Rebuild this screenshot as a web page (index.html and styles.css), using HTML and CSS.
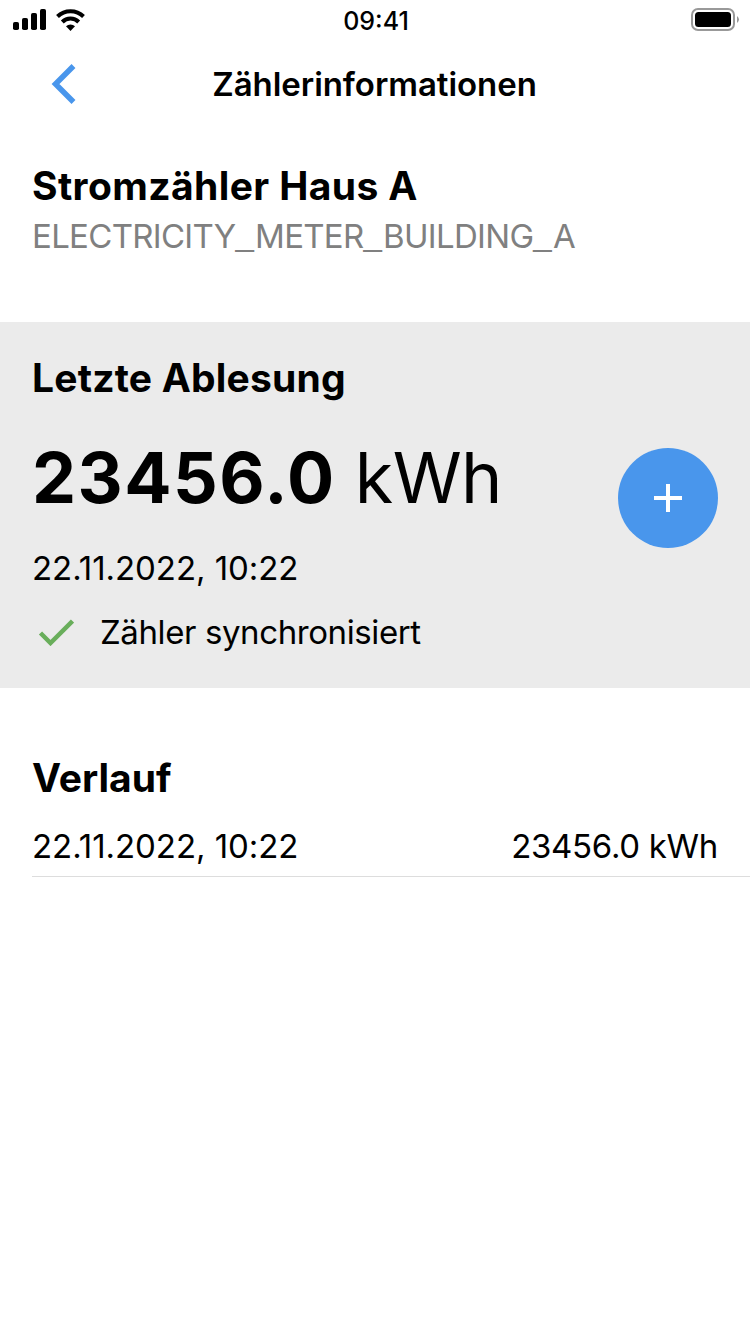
FILE: index.html
```html
<!DOCTYPE html>
<html lang="de">
<head>
    <meta charset="UTF-8">
    <meta name="viewport" content="width=device-width, initial-scale=1.0">
    <title>Zählerinformationen</title>
    <link rel="stylesheet" href="styles.css">
</head>
<body>
    <div class="status-bar">
        <div class="status-left">
            <svg width="34" height="22" viewBox="0 0 34 22">
                <rect x="0" y="13" width="6" height="8" rx="1.8"/>
                <rect x="9" y="9" width="6" height="12" rx="1.8"/>
                <rect x="18" y="4" width="6" height="17" rx="1.8"/>
                <rect x="27" y="0" width="6" height="21" rx="1.8"/>
            </svg>
            <svg width="30" height="22" viewBox="0 0 30 22">
                <path d="M1.500 7.500 A18.500 18.500 0 0 1 27.500 7.500" fill="none" stroke="#000" stroke-width="4"/>
                <path d="M6.300 13 A11.500 11.500 0 0 1 22.700 13" fill="none" stroke="#000" stroke-width="4"/>
                <path d="M10 17.300 A6.800 6.800 0 0 1 19 17.300 L14.500 22 Z"/>
            </svg>
        </div>
        <span class="clock">09:41</span>
        <svg class="battery" width="49" height="24" viewBox="0 0 49 24">
            <rect x="1" y="1" width="42" height="21" rx="6" fill="none" stroke="#999" stroke-width="2"/>
            <rect x="4" y="4" width="36" height="15" rx="3.500"/>
            <path d="M46 8 Q50 11.500 46 15 Z" fill="#999"/>
        </svg>
    </div>

    <header class="nav-bar">
        <a class="back" href="#" aria-label="Zurück">
            <svg width="28" height="42" viewBox="0 0 28 42">
                <path d="M23.500 3 L5.500 21 L23.500 39" fill="none" stroke="#4996ec" stroke-width="5.500"/>
            </svg>
        </a>
        <h1>Zählerinformationen</h1>
    </header>

    <section class="meter">
        <h2>Stromzähler Haus A</h2>
        <p class="meter-id">ELECTRICITY<span class="sep">_</span>METER<span class="sep">_</span>BUILDING<span class="sep">_</span>A</p>
    </section>

    <section class="reading">
        <h2>Letzte Ablesung</h2>
        <div class="reading-row">
            <p class="value"><b>23456.0</b> kWh</p>
            <button class="add" type="button" aria-label="Ablesung hinzufügen">
                <svg width="28" height="28" viewBox="0 0 28 28">
                    <path d="M14 0 V28 M0 14 H28" stroke="#fff" stroke-width="4"/>
                </svg>
            </button>
        </div>
        <p class="date">22.11.2022, 10:22</p>
        <div class="sync">
            <svg width="36" height="28" viewBox="0 0 36 28">
                <path d="M2.500 15 L12.500 25 L34.500 3" fill="none" stroke="#69ae5b" stroke-width="4.500"/>
            </svg>
            <span>Zähler synchronisiert</span>
        </div>
    </section>

    <section class="history">
        <h2>Verlauf</h2>
        <div class="history-row">
            <span class="history-date">22.11.2022, 10:22</span>
            <span class="history-value">23456.0 kWh</span>
        </div>
    </section>
</body>
</html>
```
FILE: styles.css
```css
* {
    box-sizing: border-box;
}

body {
    font-family: Inter, "Liberation Sans", sans-serif;
    font-size: 33px;
    background-color: #ffffff;
    color: #000;
    margin: 0;
}

h1, h2, p {
    margin: 0;
}

svg {
    display: block;
}

.status-bar {
    height: 40px;
    padding: 0 10px 0 13px;
    display: grid;
    grid-template-columns: 1fr auto 1fr;
    align-items: center;
}

.status-left {
    display: flex;
    gap: 9px;
}

.clock {
    font-size: 25px;
    font-weight: 500;
    padding: 1px 1px 0 0;
}

.battery {
    justify-self: end;
}

.nav-bar {
    height: 88px;
    padding: 0 51px 0 50px;
    display: grid;
    grid-template-columns: 1fr auto 1fr;
    align-items: center;
}

h1 {
    font-size: 33px;
    line-height: 44px;
    font-weight: 600;
    letter-spacing: -0.05px;
}

h2 {
    font-size: 39px;
    line-height: 48px;
    font-weight: 700;
    letter-spacing: 0.2px;
}

.meter {
    height: 194px;
    padding: 34px 32px 0;
}

.meter h2 {
    letter-spacing: 0.4px;
}

.meter-id {
    color: #808080;
    line-height: 52px;
    letter-spacing: -0.7px;
}

.sep {
    font-family: "Liberation Sans", sans-serif;
    line-height: 1;
    letter-spacing: 1.2px;
    vertical-align: 3px;
}

.reading {
    height: 366px;
    padding: 32px 32px 0;
    background-color: #ebebeb;
}

.reading-row {
    height: 144px;
    display: flex;
    justify-content: space-between;
    align-items: flex-start;
}

.value {
    font-size: 70px;
    line-height: 80px;
    margin-top: 36px;
    letter-spacing: -0.6px;
}

.value b {
    font-weight: 700;
    letter-spacing: 1.5px;
}

.add {
    width: 100px;
    height: 100px;
    padding: 0;
    display: flex;
    justify-content: center;
    align-items: center;
    border: none;
    border-radius: 50%;
    background-color: #4996ec;
    margin-top: 46px;
}

.date {
    line-height: 44px;
    letter-spacing: -0.05px;
}

.sync {
    display: flex;
    align-items: center;
    gap: 26px;
    padding-left: 6px;
    margin-top: 20px;
    line-height: 44px;
    letter-spacing: -0.4px;
}

.history {
    padding: 66px 0 0 32px;
}

.history h2 {
    letter-spacing: 0;
}

.history-row {
    height: 75px;
    padding: 22px 32px 0 0;
    display: flex;
    justify-content: space-between;
    line-height: 44px;
    border-bottom: 1px solid #ddd;
}

.history-date {
    letter-spacing: -0.05px;
}

.history-value {
    letter-spacing: -0.3px;
}
```
